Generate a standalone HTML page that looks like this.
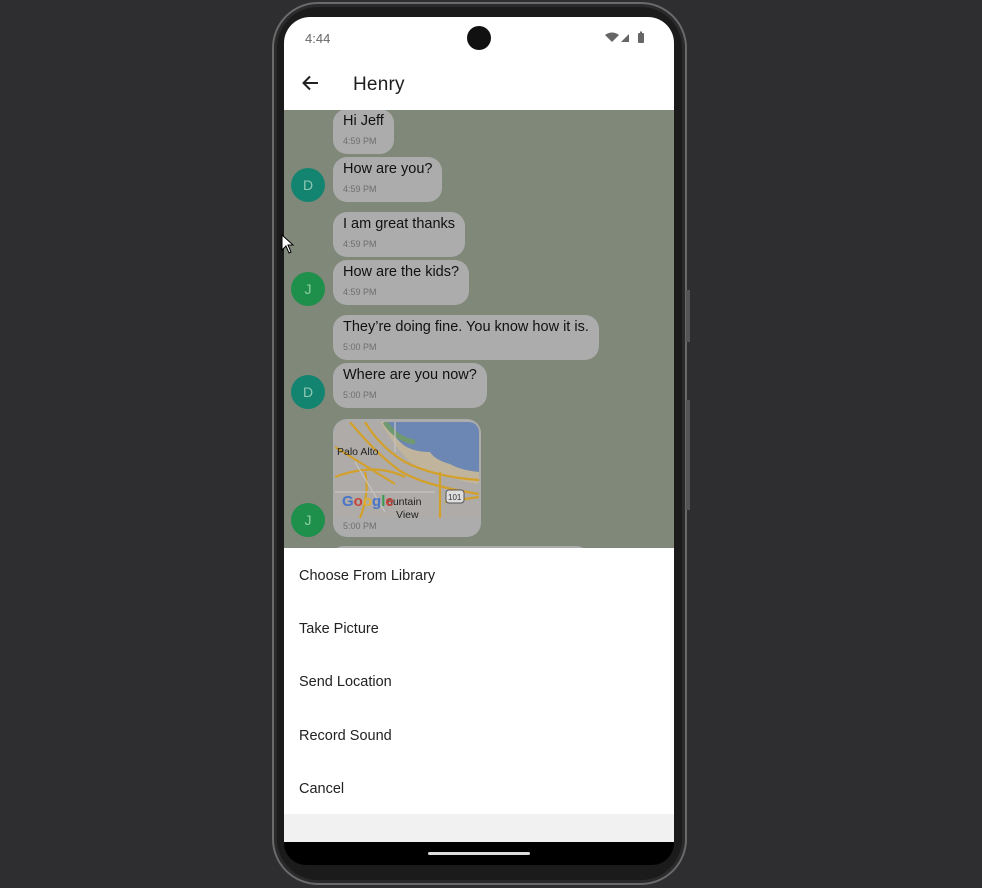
<!DOCTYPE html>
<html><head><style>
*{margin:0;padding:0;box-sizing:border-box}
body{width:982px;height:888px;background:#2e2e30;position:relative;overflow:hidden;font-family:"Liberation Sans",Roboto,sans-serif}
.frame{position:absolute;left:272px;top:2px;width:415px;height:883px;border-radius:46px;background:#1b1b1c;border:2px solid #6a6a6c;box-shadow:inset 0 0 0 3px #2a2a2a}
.screen{position:absolute;left:284px;top:17px;width:390px;height:848px;border-radius:26px 26px 22px 22px;overflow:hidden;background:#000}
.status{position:absolute;left:0;top:0;width:390px;height:93px;background:#fff}
.time{position:absolute;left:21px;top:14px;font-size:13px;color:#666}
.cam{position:absolute;left:183px;top:9px;width:24px;height:24px;border-radius:50%;background:#111}
.title{position:absolute;left:69px;top:57px;font-size:19px;color:#1d1d1d;letter-spacing:.2px}
.chat{position:absolute;left:0;top:93px;width:390px;height:438px;background:#7f8879;overflow:hidden}
.b{position:absolute;left:49px;background:#acacac;border-radius:14px;padding:4px 10px 7px 10px;font-size:14.5px;line-height:17px;color:#111}
.b small{display:block;font-size:9px;line-height:11px;color:#6e6e6e;margin-top:6px}
.av{position:absolute;left:7px;width:34px;height:34px;border-radius:50%;color:#8fc8b4;font-size:14px;text-align:center;line-height:34px}
.D{background:#138470}.J{background:#1f8f4c;color:#8fd0a6}
.sheet{position:absolute;left:0;top:531px;width:390px;height:266px;background:#fff}
.sheet div{height:53.2px;line-height:56px;padding-left:15px;font-size:14.5px;color:#222}
.gray{position:absolute;left:0;top:797px;width:390px;height:28px;background:#f1f1f1}
.home{position:absolute;left:144px;top:835px;width:102px;height:3px;background:#ddd;border-radius:2px}
</style></head><body>
<div class="frame"></div>
<div class="screen">
 <div class="status">
  <div class="time">4:44</div>
  <div class="cam"></div>
  <svg style="position:absolute;left:320px;top:14px" width="46" height="14" viewBox="0 0 46 14">
   <path d="M1 4 Q8 -1 15 4 L8 11 Z" fill="#666"/>
   <path d="M17 11 L25 3 L25 11 Z" fill="#666"/>
   <rect x="34" y="2" width="6" height="10" rx="1" fill="#666"/><rect x="36" y="0.5" width="2" height="2" fill="#666"/>
  </svg>
  <svg style="position:absolute;left:18px;top:58px" width="18" height="16" viewBox="0 0 18 16"><path d="M16 8H2M8 1.5L1.5 8 8 14.5" stroke="#222" stroke-width="2" fill="none"/></svg>
  <div class="title">Henry</div>
 </div>
 <div class="chat">
  <div class="b" style="top:-1px">Hi Jeff<small>4:59 PM</small></div>
  <div class="b" style="top:47px">How are you?<small>4:59 PM</small></div>
  <div class="av D" style="top:58px">D</div>
  <div class="b" style="top:102px">I am great thanks<small>4:59 PM</small></div>
  <div class="b" style="top:150px">How are the kids?<small>4:59 PM</small></div>
  <div class="av J" style="top:162px">J</div>
  <div class="b" style="top:205px">They’re doing fine. You know how it is.<small>5:00 PM</small></div>
  <div class="b" style="top:253px">Where are you now?<small>5:00 PM</small></div>
  <div class="av D" style="top:265px">D</div>
  <div class="b" style="top:309px;width:148px;height:118px;padding:3px 2px 0 2px">
   <svg width="144" height="96" viewBox="0 0 144 96" style="display:block;border-radius:10px 10px 0 0">
    <rect width="144" height="96" fill="#aeaba8"/>
    <path d="M45 0 H144 V62 Q125 60 110 52 Q90 50 75 40 Q60 25 45 0Z" fill="#c0b49c"/>
    <path d="M50 0 H144 V50 Q125 48 115 42 Q100 38 95 30 Q75 30 65 20 Q55 10 50 0Z" fill="#6c87b3"/>
    <path d="M50 0 Q62 18 80 20" stroke="#6f9a70" stroke-width="5" fill="none"/>
    <path d="M15 0 Q40 30 60 45 Q80 62 144 72 M30 0 Q45 25 70 40 Q100 55 144 58 M0 55 Q40 40 70 55 M25 96 Q35 70 30 50 M0 25 L60 62 M105 50 V96 M110 80 L144 75" stroke="#d3a02a" stroke-width="2.2" fill="none"/>
    <path d="M0 70 H100 M60 0 V30 M20 40 L50 90" stroke="#c6c3c0" stroke-width="1.2" fill="none"/>
    <text x="2" y="33" font-size="10.5" fill="#222" font-family="Liberation Sans">Palo Alto</text>
    <text x="52" y="83" font-size="10.5" fill="#222" font-family="Liberation Sans">ountain</text>
    <text x="61" y="96" font-size="10.5" fill="#222" font-family="Liberation Sans">View</text>
    <text x="7" y="84" font-size="15" font-weight="bold" font-family="Liberation Sans"><tspan fill="#4a74c8">G</tspan><tspan fill="#c8423a">o</tspan><tspan fill="#e0b030">o</tspan><tspan fill="#4a74c8">g</tspan><tspan fill="#3a9a50">l</tspan><tspan fill="#c8423a">e</tspan></text>
    <rect x="111" y="68" width="18" height="13" rx="3" fill="#ddd" stroke="#555"/>
    <text x="113" y="78" font-size="8" fill="#333" font-family="Liberation Sans">101</text>
   </svg>
   <small style="padding-left:8px;margin-top:3px">5:00 PM</small>
  </div>
  <div class="av J" style="top:393px">J</div>
  <div class="b" style="top:436px;width:254px;height:20px"></div>
 </div>
 <div class="sheet">
  <div>Choose From Library</div><div>Take Picture</div><div>Send Location</div><div>Record Sound</div><div>Cancel</div>
 </div>
 <div class="gray"></div>
 <div class="home"></div>
</div>
<svg style="position:absolute;left:281px;top:234px" width="14" height="20" viewBox="0 0 14 20"><path d="M1 1V16L5 12L8 19L10 18L7 11H12Z" fill="#fff" stroke="#000" stroke-width="1"/></svg>
<div style="position:absolute;left:686px;top:290px;width:4px;height:52px;background:#555"></div>
<div style="position:absolute;left:686px;top:400px;width:4px;height:110px;background:#555"></div>
</body></html>
